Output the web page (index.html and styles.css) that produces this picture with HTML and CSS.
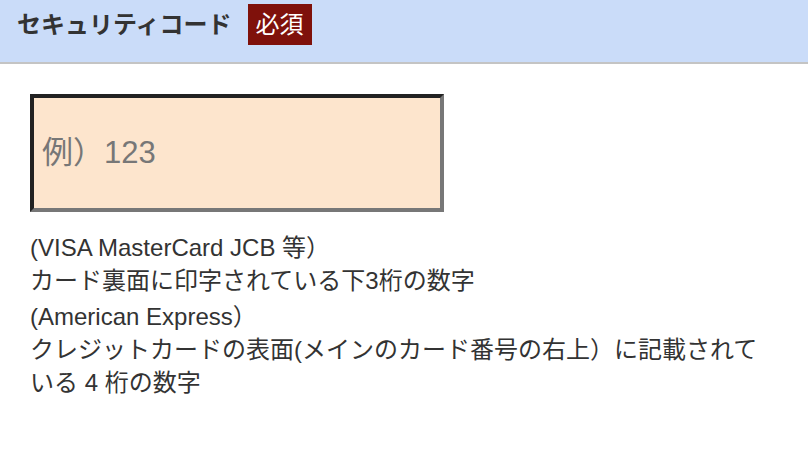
FILE: index.html
```html
<!DOCTYPE html>
<html lang="ja">
<head>
<meta charset="utf-8">
<link rel="stylesheet" href="styles.css">
</head>
<body>
<header class="head">
  <h1 class="title">セキュリティコード</h1>
  <span class="badge">必須</span>
</header>
<main class="body">
  <input class="field" type="text" placeholder="例）123">
  <div class="notes">
    <p class="note">(VISA MasterCard JCB 等）<br>カード裏面に印字されている下3桁の数字</p>
    <p class="note">(American Express）<br>クレジットカードの表面(メインのカード番号の右上）に記載されている 4 桁の数字</p>
  </div>
</main>
</body>
</html>
```
FILE: styles.css
```css
html, body {
  margin: 0;
  padding: 0;
  background: #fff;
  font-family: "Liberation Sans", "Noto Sans CJK JP", sans-serif;
  color: #333;
}
.head {
  display: flex;
  align-items: center;
  gap: 16px;
  height: 41px;
  padding: 4px 17px 17px;
  background: #cadcf9;
  border-bottom: 2px solid #c4c4c4;
}
.title {
  margin: 0;
  font-size: 24px;
  font-weight: bold;
  color: #333;
  line-height: 1;
}
.badge {
  display: flex;
  align-items: center;
  height: 41px;
  padding: 0 8px;
  background: #7f110b;
  color: #fff;
  font-size: 24px;
  line-height: 1;
}
.body {
  padding: 30px 30px 0;
}
.field {
  display: block;
  box-sizing: border-box;
  width: 414px;
  height: 118px;
  margin: 0;
  padding: 0 8px;
  border-style: solid;
  border-width: 4px;
  border-color: #222 #777 #777 #222;
  background: #fde5cd;
  font-family: "Liberation Sans", "Noto Sans CJK JP", sans-serif;
  font-size: 31px;
  color: #333;
  outline: none;
}
.field::placeholder {
  color: #777;
  opacity: 1;
}
.notes {
  margin-top: 19px;
}
.note {
  margin: 0 0 3px;
  font-size: 24px;
  line-height: 33px;
}
```
